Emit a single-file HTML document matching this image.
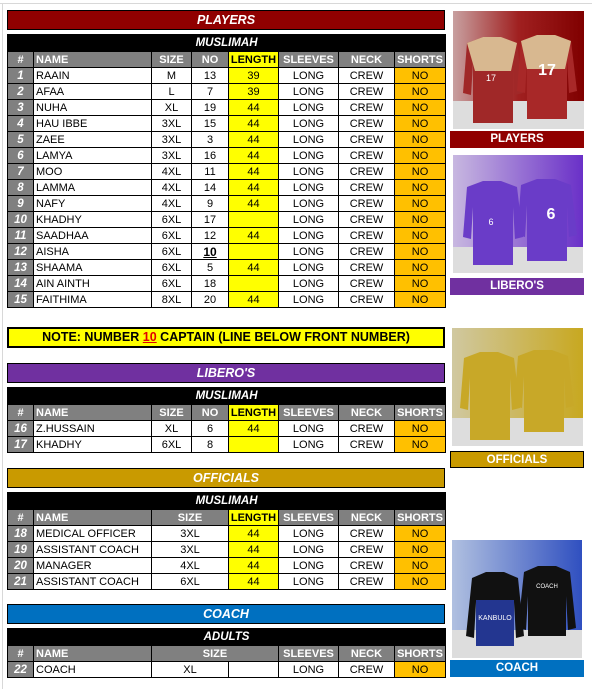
<!DOCTYPE html>
<html><head><meta charset="utf-8"><style>
*{margin:0;padding:0;box-sizing:border-box}
body{width:592px;height:689px;background:#fff;position:relative;overflow:hidden;font-family:"Liberation Sans",sans-serif;font-size:11px;color:#000}
.vl{position:absolute;left:2px;top:3px;width:1px;height:686px;background:#d8d8d8}
.hl{position:absolute;left:0;top:3px;width:592px;height:1px;background:#d8d8d8}
.bar{position:absolute;left:7px;width:438px;border:1px solid #000;color:#fff;font-weight:bold;font-style:italic;font-size:12.5px;text-align:center}
table{position:absolute;left:7px;width:438px;border-collapse:collapse;table-layout:fixed}
td{border:1px solid #000;height:16px;line-height:14px;text-align:center;padding:0;white-space:nowrap;overflow:hidden}
tr.sub td{background:#000;color:#fff;font-weight:bold;font-style:italic;font-size:11.5px;height:17px}
tr.h td{background:#808080;color:#fff;font-weight:bold;font-size:11px}
tr.h td.y{background:#ff0;color:#000}
td.n{background:#808080;color:#fff;font-weight:bold;font-style:italic;font-size:11.5px}
td.l{text-align:left;padding-left:2px}
td.y{background:#ff0}
td.o{background:#ffc000}
.img{position:absolute}
.lab{position:absolute;left:450px;width:134px;height:17px;color:#fff;font-weight:bold;font-size:11.5px;text-align:center;line-height:17px}
</style></head><body>
<div class="hl"></div><div class="vl"></div>

<div class="bar" style="top:10px;height:20px;line-height:18px;background:#900000">PLAYERS</div>
<table style="top:34px">
<colgroup><col style="width:26px"><col style="width:118px"><col style="width:40px"><col style="width:37px"><col style="width:50px"><col style="width:60px"><col style="width:56px"><col style="width:51px"></colgroup>
<tr class="sub"><td colspan="8">MUSLIMAH</td></tr>
<tr class="h"><td>#</td><td class="l">NAME</td><td>SIZE</td><td>NO</td><td class="y">LENGTH</td><td>SLEEVES</td><td>NECK</td><td>SHORTS</td></tr>
<tr><td class="n">1</td><td class="l">RAAIN</td><td>M</td><td>13</td><td class="y">39</td><td>LONG</td><td>CREW</td><td class="o">NO</td></tr>
<tr><td class="n">2</td><td class="l">AFAA</td><td>L</td><td>7</td><td class="y">39</td><td>LONG</td><td>CREW</td><td class="o">NO</td></tr>
<tr><td class="n">3</td><td class="l">NUHA</td><td>XL</td><td>19</td><td class="y">44</td><td>LONG</td><td>CREW</td><td class="o">NO</td></tr>
<tr><td class="n">4</td><td class="l">HAU IBBE</td><td>3XL</td><td>15</td><td class="y">44</td><td>LONG</td><td>CREW</td><td class="o">NO</td></tr>
<tr><td class="n">5</td><td class="l">ZAEE</td><td>3XL</td><td>3</td><td class="y">44</td><td>LONG</td><td>CREW</td><td class="o">NO</td></tr>
<tr><td class="n">6</td><td class="l">LAMYA</td><td>3XL</td><td>16</td><td class="y">44</td><td>LONG</td><td>CREW</td><td class="o">NO</td></tr>
<tr><td class="n">7</td><td class="l">MOO</td><td>4XL</td><td>11</td><td class="y">44</td><td>LONG</td><td>CREW</td><td class="o">NO</td></tr>
<tr><td class="n">8</td><td class="l">LAMMA</td><td>4XL</td><td>14</td><td class="y">44</td><td>LONG</td><td>CREW</td><td class="o">NO</td></tr>
<tr><td class="n">9</td><td class="l">NAFY</td><td>4XL</td><td>9</td><td class="y">44</td><td>LONG</td><td>CREW</td><td class="o">NO</td></tr>
<tr><td class="n">10</td><td class="l">KHADHY</td><td>6XL</td><td>17</td><td class="y"></td><td>LONG</td><td>CREW</td><td class="o">NO</td></tr>
<tr><td class="n">11</td><td class="l">SAADHAA</td><td>6XL</td><td>12</td><td class="y">44</td><td>LONG</td><td>CREW</td><td class="o">NO</td></tr>
<tr><td class="n">12</td><td class="l">AISHA</td><td>6XL</td><td style="font-weight:bold;text-decoration:underline;font-size:12px">10</td><td class="y"></td><td>LONG</td><td>CREW</td><td class="o">NO</td></tr>
<tr><td class="n">13</td><td class="l">SHAAMA</td><td>6XL</td><td>5</td><td class="y">44</td><td>LONG</td><td>CREW</td><td class="o">NO</td></tr>
<tr><td class="n">14</td><td class="l">AIN AINTH</td><td>6XL</td><td>18</td><td class="y"></td><td>LONG</td><td>CREW</td><td class="o">NO</td></tr>
<tr><td class="n">15</td><td class="l">FAITHIMA</td><td>8XL</td><td>20</td><td class="y">44</td><td>LONG</td><td>CREW</td><td class="o">NO</td></tr>
</table>

<div style="position:absolute;left:7px;top:327px;width:438px;height:21px;border:2px solid #000;background:#ff0;font-weight:bold;font-size:12.5px;text-align:center;line-height:17px">NOTE: NUMBER <span style="color:#e00000;text-decoration:underline">10</span> CAPTAIN (LINE BELOW FRONT NUMBER)</div>

<div class="bar" style="top:363px;height:20px;line-height:18px;background:#7030a0">LIBERO'S</div>
<table style="top:387px">
<colgroup><col style="width:26px"><col style="width:118px"><col style="width:40px"><col style="width:37px"><col style="width:50px"><col style="width:60px"><col style="width:56px"><col style="width:51px"></colgroup>
<tr class="sub"><td colspan="8">MUSLIMAH</td></tr>
<tr class="h"><td>#</td><td class="l">NAME</td><td>SIZE</td><td>NO</td><td class="y">LENGTH</td><td>SLEEVES</td><td>NECK</td><td>SHORTS</td></tr>
<tr><td class="n">16</td><td class="l">Z.HUSSAIN</td><td>XL</td><td>6</td><td class="y">44</td><td>LONG</td><td>CREW</td><td class="o">NO</td></tr>
<tr><td class="n">17</td><td class="l">KHADHY</td><td>6XL</td><td>8</td><td class="y"></td><td>LONG</td><td>CREW</td><td class="o">NO</td></tr>
</table>

<div class="bar" style="top:468px;height:20px;line-height:18px;background:#c99a00">OFFICIALS</div>
<table style="top:492px">
<colgroup><col style="width:26px"><col style="width:118px"><col style="width:40px"><col style="width:37px"><col style="width:50px"><col style="width:60px"><col style="width:56px"><col style="width:51px"></colgroup>
<tr class="sub"><td colspan="8">MUSLIMAH</td></tr>
<tr class="h"><td>#</td><td class="l">NAME</td><td colspan="2">SIZE</td><td class="y">LENGTH</td><td>SLEEVES</td><td>NECK</td><td>SHORTS</td></tr>
<tr><td class="n">18</td><td class="l">MEDICAL OFFICER</td><td colspan="2">3XL</td><td class="y">44</td><td>LONG</td><td>CREW</td><td class="o">NO</td></tr>
<tr><td class="n">19</td><td class="l">ASSISTANT COACH</td><td colspan="2">3XL</td><td class="y">44</td><td>LONG</td><td>CREW</td><td class="o">NO</td></tr>
<tr><td class="n">20</td><td class="l">MANAGER</td><td colspan="2">4XL</td><td class="y">44</td><td>LONG</td><td>CREW</td><td class="o">NO</td></tr>
<tr><td class="n">21</td><td class="l">ASSISTANT COACH</td><td colspan="2">6XL</td><td class="y">44</td><td>LONG</td><td>CREW</td><td class="o">NO</td></tr>
</table>

<div class="bar" style="top:604px;height:20px;line-height:18px;background:#0070c0">COACH</div>
<table style="top:628px">
<colgroup><col style="width:26px"><col style="width:118px"><col style="width:40px"><col style="width:37px"><col style="width:50px"><col style="width:60px"><col style="width:56px"><col style="width:51px"></colgroup>
<tr class="sub"><td colspan="8">ADULTS</td></tr>
<tr class="h"><td>#</td><td class="l">NAME</td><td colspan="3">SIZE</td><td>SLEEVES</td><td>NECK</td><td>SHORTS</td></tr>
<tr><td class="n">22</td><td class="l">COACH</td><td colspan="2">XL</td><td></td><td>LONG</td><td>CREW</td><td class="o">NO</td></tr>
</table>

<!-- images -->
<svg class="img" style="left:453px;top:11px" width="131" height="118" viewBox="0 0 131 118">
<defs><linearGradient id="g1" x1="0" y1="0" x2="1" y2="0"><stop offset="0" stop-color="#c8a0a0"/><stop offset=".5" stop-color="#a02020"/><stop offset="1" stop-color="#800000"/></linearGradient></defs>
<rect width="131" height="118" fill="url(#g1)"/><rect y="90" width="131" height="28" fill="#ddd"/>
<path d="M14 32 L30 26 L48 26 L64 32 L70 82 L62 84 L60 52 L60 112 L20 112 L20 52 L18 84 L10 82 Z" fill="#a02828"/>
<path d="M14 32 L30 26 L48 26 L64 32 L58 60 L22 60 Z" fill="#d8b890"/>
<path d="M68 30 L84 24 L102 24 L118 30 L124 80 L116 82 L114 50 L114 108 L74 108 L74 50 L72 82 L64 80 Z" fill="#a82828"/>
<path d="M68 30 L84 24 L102 24 L118 30 L112 58 L74 58 Z" fill="#d8b890"/>
<text x="38" y="70" fill="#fff" font-size="9" font-family="Liberation Sans" text-anchor="middle">17</text>
<text x="94" y="64" fill="#fff" font-size="16" font-weight="bold" font-family="Liberation Sans" text-anchor="middle">17</text>
</svg>
<div class="lab" style="top:131px;background:#900000">PLAYERS</div>

<svg class="img" style="left:453px;top:155px" width="130" height="118" viewBox="0 0 130 118">
<defs><linearGradient id="g2" x1="0" y1="0" x2="1" y2="0"><stop offset="0" stop-color="#c8b8e0"/><stop offset="1" stop-color="#6a30c8"/></linearGradient></defs>
<rect width="130" height="118" fill="url(#g2)"/><rect y="92" width="130" height="26" fill="#ddd"/>
<path d="M14 32 L30 26 L48 26 L64 32 L70 82 L62 84 L60 52 L60 110 L20 110 L20 52 L18 84 L10 82 Z" fill="#6a3cc8"/>
<path d="M68 30 L84 24 L102 24 L118 30 L124 80 L116 82 L114 50 L114 106 L74 106 L74 50 L72 82 L64 80 Z" fill="#6a3cc8"/>
<text x="38" y="70" fill="#fff" font-size="9" font-family="Liberation Sans" text-anchor="middle">6</text>
<text x="98" y="64" fill="#fff" font-size="16" font-weight="bold" font-family="Liberation Sans" text-anchor="middle">6</text>
</svg>
<div class="lab" style="top:278px;background:#7030a0">LIBERO'S</div>

<svg class="img" style="left:452px;top:328px" width="131" height="118" viewBox="0 0 131 118">
<defs><linearGradient id="g3" x1="0" y1="0" x2="1" y2="0"><stop offset="0" stop-color="#d0c8a0"/><stop offset="1" stop-color="#c8a820"/></linearGradient></defs>
<rect width="131" height="118" fill="url(#g3)"/><rect y="90" width="131" height="28" fill="#ddd"/>
<path d="M12 30 L28 24 L46 24 L62 30 L68 80 L60 82 L58 50 L58 112 L18 112 L18 50 L16 82 L8 80 Z" fill="#c8a828"/>
<path d="M66 28 L82 22 L100 22 L116 28 L122 78 L114 80 L112 48 L112 104 L72 104 L72 48 L70 80 L62 78 Z" fill="#c8a828"/>
</svg>
<div class="lab" style="top:451px;background:#c99a00;border:1px solid #000">OFFICIALS</div>

<svg class="img" style="left:452px;top:540px" width="130" height="118" viewBox="0 0 130 118">
<defs><linearGradient id="g4" x1="0" y1="0" x2="1" y2="0"><stop offset="0" stop-color="#b0c0e0"/><stop offset="1" stop-color="#3050c0"/></linearGradient></defs>
<rect width="130" height="118" fill="url(#g4)"/><rect y="90" width="130" height="28" fill="#ddd"/>
<path d="M72 32 L86 26 L104 26 L118 32 L124 88 L116 90 L114 56 L114 96 L76 96 L76 56 L74 90 L66 88 Z" fill="#111"/>
<path d="M20 38 L34 32 L52 32 L66 38 L72 96 L64 98 L62 62 L62 106 L24 106 L24 62 L22 98 L14 96 Z" fill="#111"/>
<path d="M24 60 L62 60 L62 106 L24 106 Z" fill="#2840b0" opacity=".8"/>
<text x="43" y="80" fill="#fff" font-size="7" font-family="Liberation Sans" text-anchor="middle">KANBULO</text>
<text x="95" y="48" fill="#fff" font-size="6" font-family="Liberation Sans" text-anchor="middle">COACH</text>
</svg>
<div class="lab" style="top:660px;background:#0070c0">COACH</div>
</body></html>
